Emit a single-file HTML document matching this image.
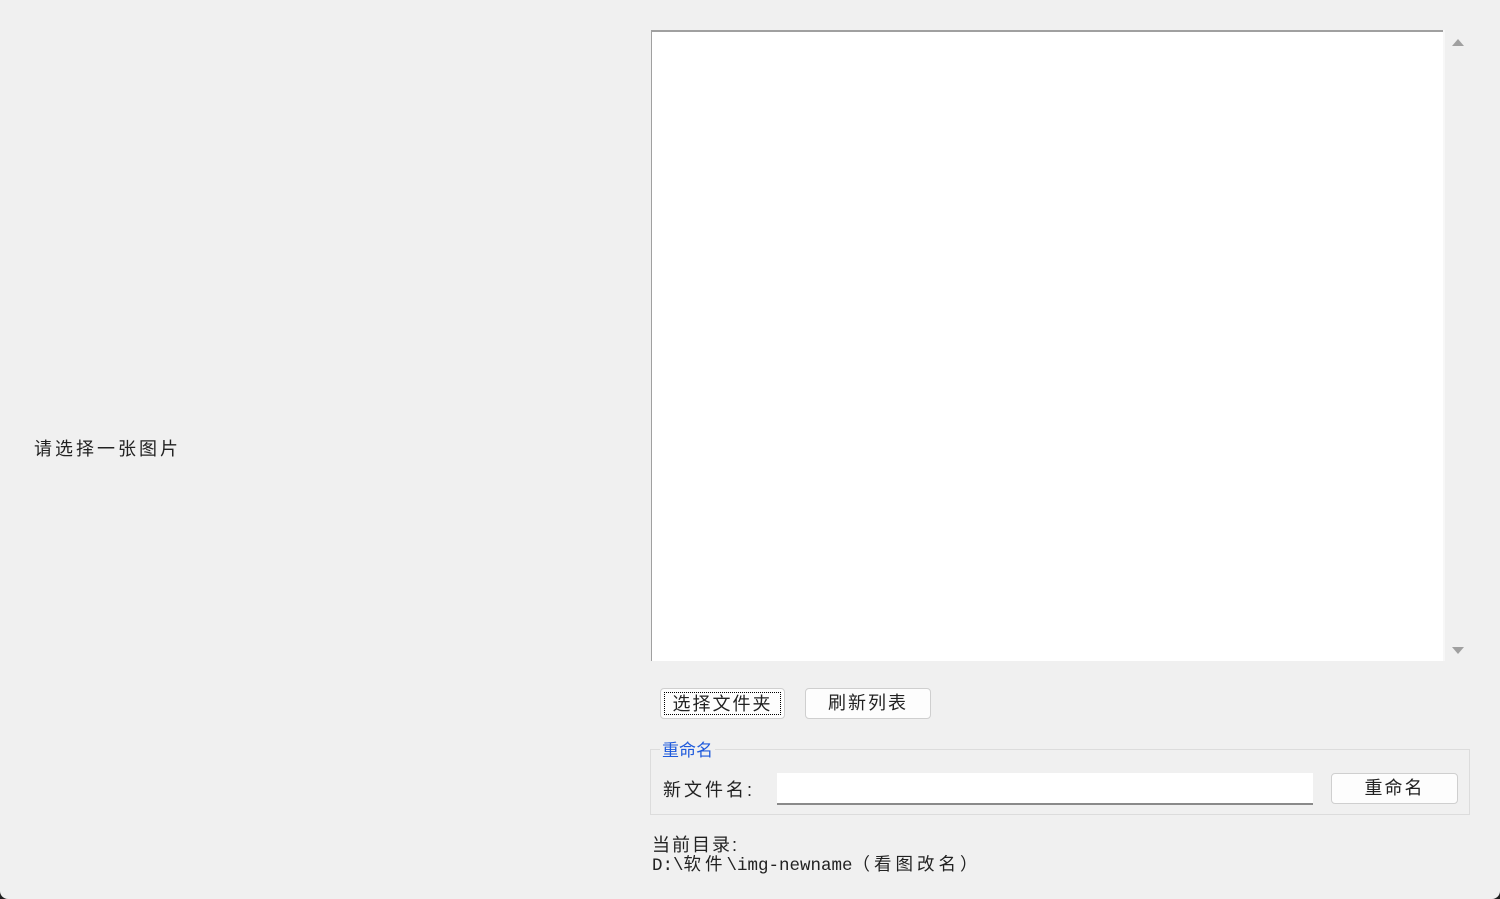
<!DOCTYPE html>
<html><head><meta charset="utf-8"><style>
html,body{margin:0;padding:0;width:1500px;height:899px;background:#202020;overflow:hidden}
#w{position:absolute;left:0;top:0;width:1500px;height:899px;background:#f0f0f0;border-radius:0 0 8px 8px;font-family:"Liberation Sans","Noto Sans CJK SC",sans-serif;font-size:17px;color:#222}
.a{position:absolute}
.btn{position:absolute;background:#fdfdfd;border:1px solid #cfcfcf;border-radius:4px;box-sizing:border-box;text-align:center;font-size:18px;letter-spacing:2px;line-height:28px}
.c{letter-spacing:4px}
</style></head><body><div id="w">
<div class="a" style="left:34px;top:435px;letter-spacing:3px;font-size:18px">请选择一张图片</div>
<div class="a" style="left:651px;top:30px;width:792px;height:631px;background:#fff;border-top:2px solid #a0a0a0;border-left:1px solid #a0a0a0;box-sizing:border-box"></div>
<div class="a" style="left:1443px;top:30px;width:2px;height:631px;background:#f7f7f7"></div>
<svg class="a" style="left:1451px;top:37px" width="14" height="10"><path d="M1 9L7 2L13 9Z" fill="#a0a0a0"/></svg>
<svg class="a" style="left:1451px;top:646px" width="14" height="10"><path d="M1 1L7 8L13 1Z" fill="#a0a0a0"/></svg>
<div class="btn" style="left:660px;top:688px;width:125px;height:31px"><div style="position:absolute;left:3px;top:3px;right:3px;bottom:3px;border:1px dotted #000;line-height:23px">选择文件夹</div></div>
<div class="btn" style="left:805px;top:688px;width:126px;height:31px">刷新列表</div>
<div class="a" style="left:650px;top:749px;width:820px;height:66px;border:1px solid #dcdcdc;box-sizing:border-box"></div>
<div class="a" style="left:660px;top:736px;background:#f0f0f0;color:#1e5adc;padding:0 2px;font-size:17px">重命名</div>
<div class="a" style="left:663px;top:776px;letter-spacing:3px;font-size:18px">新文件名:</div>
<div class="a" style="left:777px;top:773px;width:536px;height:32px;background:#fff;border-bottom:2px solid #8a8a8a;box-sizing:border-box"></div>
<div class="btn" style="left:1331px;top:773px;width:127px;height:31px">重命名</div>
<div class="a" style="left:652px;top:831px;letter-spacing:2px;font-size:18px">当前目录:</div>
<div class="a" style="left:652px;top:851px;font-family:'Liberation Mono','Noto Sans CJK SC',monospace;font-size:17.5px;white-space:nowrap">D:\<span class="c">软件</span>\img-newname<span class="c">（看图改名）</span></div>
</div></body></html>
